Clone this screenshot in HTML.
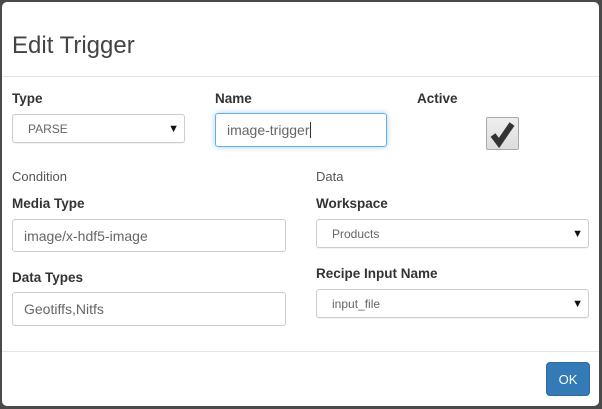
<!DOCTYPE html>
<html><head><style>
*{box-sizing:border-box;margin:0;padding:0}
body{width:602px;height:409px;background:#4a4a4a;font-family:"Liberation Sans",sans-serif;position:relative;overflow:hidden}
.m{position:absolute;left:2px;top:2px;width:597px;height:404px;background:#fff;border-radius:5px}
.abs{position:absolute}
h1{position:absolute;left:10px;top:30px;font-size:24px;font-weight:normal;color:#444}
.hr{position:absolute;left:0;width:597px;height:1px;background:#e5e5e5}
.lb{position:absolute;font-size:13.5px;font-weight:bold;color:#333}
.sl{position:absolute;font-size:13px;color:#555}
.in{position:absolute;border:1px solid #ccc;border-radius:3px;font-size:14px;color:#666;padding-left:11px;display:flex;align-items:center;background:#fff}
.se{position:absolute;border:1px solid #ccc;border-radius:3px;font-size:12px;color:#666;padding-left:15px;display:flex;align-items:center;background:#fff;box-shadow:0 1px 1px rgba(0,0,0,.05)}
.se:after{content:"▼";position:absolute;right:5px;top:50%;transform:translateY(-50%);font-size:11px;color:#111}
</style></head><body>
<div class="m">
<h1>Edit Trigger</h1>
<div class="hr" style="top:74px"></div>
<div class="lb" style="left:10px;top:89px">Type</div>
<div class="se" style="left:10px;top:112px;width:173px;height:29px">PARSE</div>
<div class="lb" style="left:213px;top:89px">Name</div>
<div class="in" style="left:213px;top:111px;width:172px;height:34px;border-color:#66afe9;box-shadow:0 0 6px rgba(102,175,233,.6)">image-trigger<span style="border-left:1px solid #333;height:16px;margin-left:1px"></span></div>
<div class="lb" style="left:415px;top:89px">Active</div>
<div class="abs" style="left:484px;top:115px;width:33px;height:33px;border:1px solid #aaa;border-radius:2px;background:linear-gradient(#eee,#ddd)">
<svg width="31" height="31" viewBox="0 0 31 31"><path d="M6 17 L12 25 L25 6" fill="none" stroke="#333" stroke-width="6" stroke-linejoin="miter"/></svg></div>
<div class="sl" style="left:10px;top:167px">Condition</div>
<div class="sl" style="left:314px;top:167px">Data</div>
<div class="lb" style="left:10px;top:194px">Media Type</div>
<div class="lb" style="left:314px;top:194px">Workspace</div>
<div class="in" style="left:10px;top:217px;width:274px;height:33px">image/x-hdf5-image</div>
<div class="se" style="left:314px;top:217px;width:273px;height:29px">Products</div>
<div class="lb" style="left:10px;top:268px">Data Types</div>
<div class="lb" style="left:314px;top:264px">Recipe Input Name</div>
<div class="in" style="left:10px;top:290px;width:274px;height:34px">Geotiffs,Nitfs</div>
<div class="se" style="left:314px;top:287px;width:273px;height:29px">input_file</div>
<div class="hr" style="top:349px"></div>
<div class="abs" style="left:544px;top:360px;width:44px;height:34px;background:#337ab7;border:1px solid #2e6da4;border-radius:4px;color:#fff;font-size:13px;display:flex;align-items:center;justify-content:center">OK</div>
</div>
</body></html>
